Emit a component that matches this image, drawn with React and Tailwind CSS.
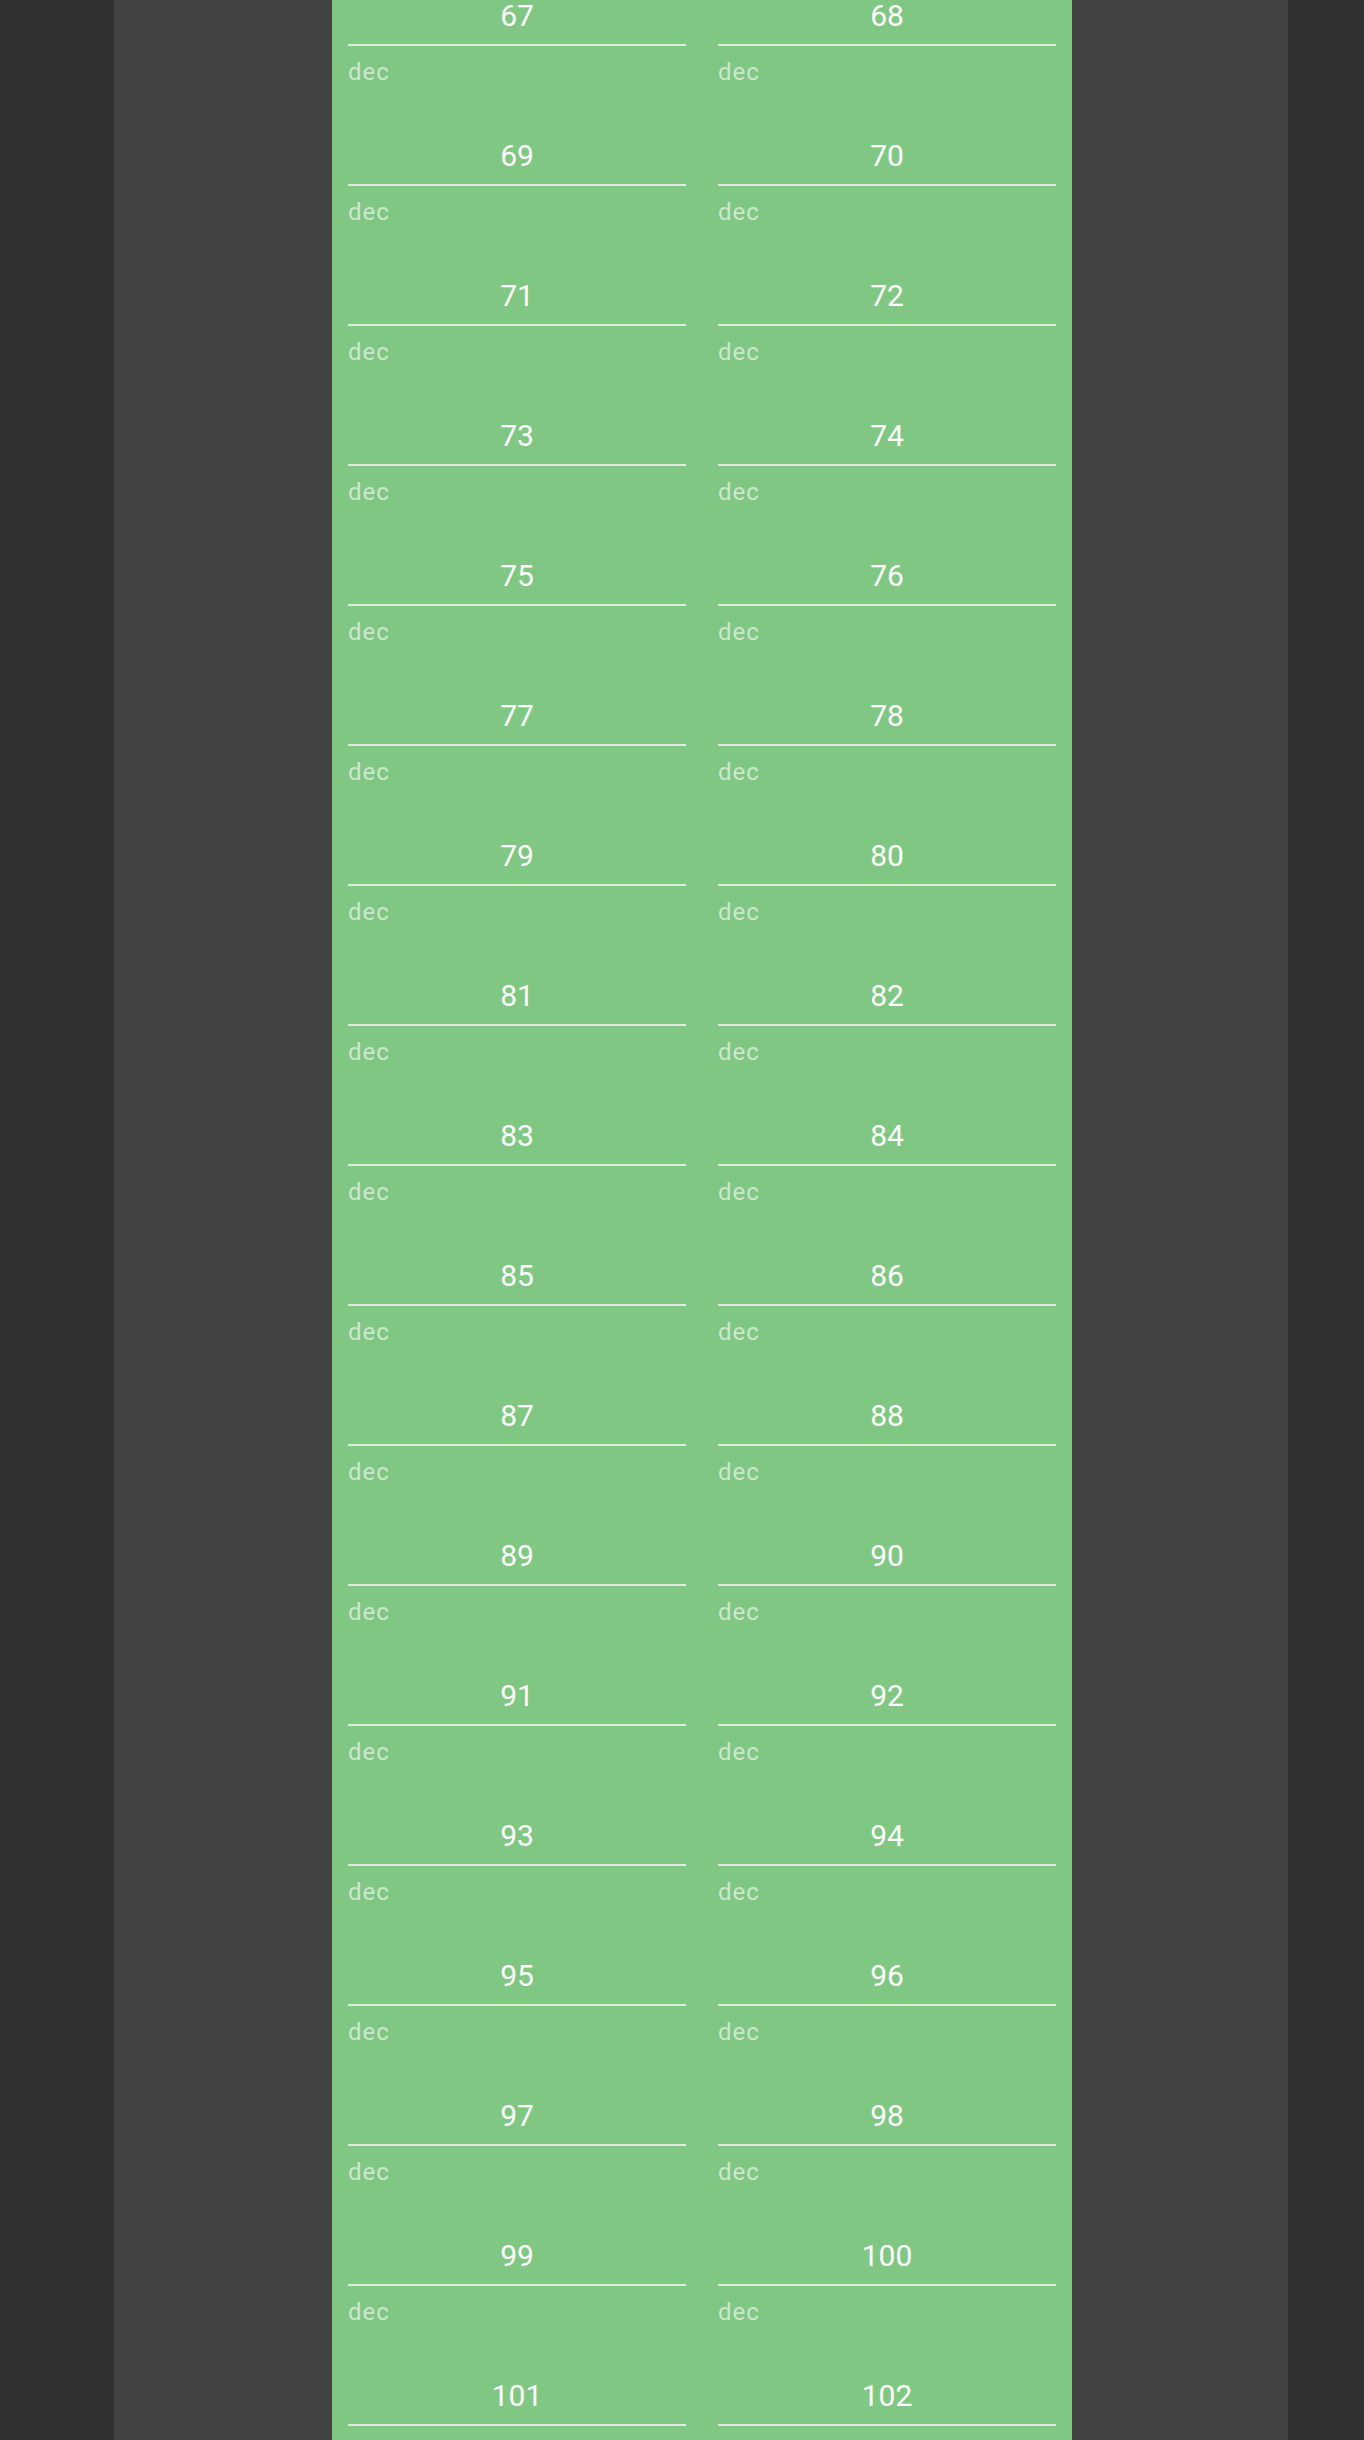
import React from "react";

function Field({ value }) {
  return (
    <div className="flex flex-col pt-[12px]">
      <div className="h-[28px] text-[24px] leading-[28px] tracking-[1px] text-white/60">dec</div>
      <div className="mt-[52px] h-[48px] pb-[10px] border-b-2 border-white/70 text-center text-[30px] leading-[36px] text-white">
        {value}
      </div>
    </div>
  );
}

export default function App() {
  const rows = [];
  for (let n = 67; n <= 105; n += 2) rows.push([n, n + 1]);
  return (
    <div
      className="flex h-[2440px] w-full overflow-hidden bg-[#303030]"
      style={{ fontFamily: "Roboto, 'Noto Sans', sans-serif" }}
    >
      <div className="ml-[114px] flex w-[1174px] bg-[#424242] pl-[218px]">
        <div className="w-[740px] bg-[#81c784] px-[16px]">
          <div className="-mt-[94px] grid grid-cols-2 gap-x-[32px]">
            {rows.map(([a, b]) => (
              <React.Fragment key={a}>
                <Field value={a} />
                <Field value={b} />
              </React.Fragment>
            ))}
          </div>
        </div>
      </div>
    </div>
  );
}
